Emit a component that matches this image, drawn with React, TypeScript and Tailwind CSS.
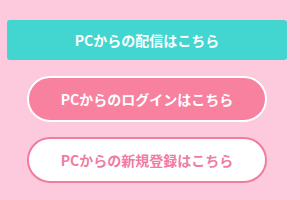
export default function App() {
  return (
    <div className="w-[300px] h-[200px] bg-[#fdc9dd]">
      <div className="w-[294px] flex flex-col items-center pt-5 font-['Noto_Sans_CJK_JP',sans-serif] font-bold text-[14px]">
        <a className="w-[280px] h-10 rounded-[3px] bg-[#43d5cf] text-white flex items-center justify-center">
          PCからの配信はこちら
        </a>
        <a className="mt-4 w-[240px] h-[46px] rounded-full bg-[#f8819f] border-2 border-white text-white flex items-center justify-center">
          PCからのログインはこちら
        </a>
        <a className="mt-[15px] w-[240px] h-[46px] rounded-full bg-white border-2 border-[#f07c9e] text-[#f07ca6] flex items-center justify-center">
          PCからの新規登録はこちら
        </a>
      </div>
    </div>
  );
}
